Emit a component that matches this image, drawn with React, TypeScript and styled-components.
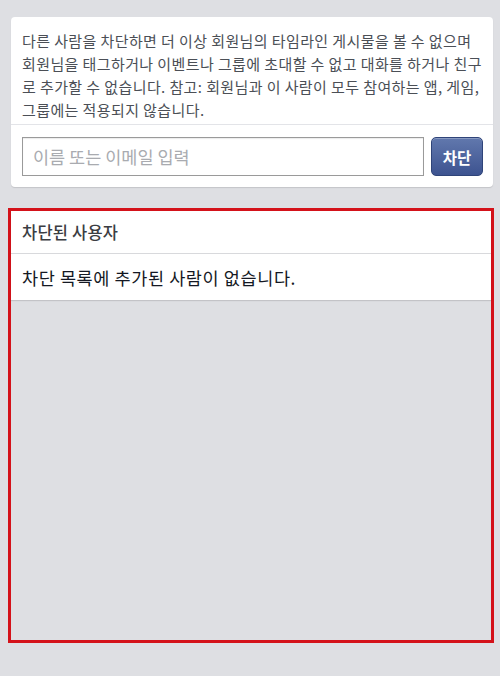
import React from 'react';
import styled, { createGlobalStyle } from 'styled-components';

const GlobalStyle = createGlobalStyle`
    html, body {
        margin: 0;
        padding: 0;
        background-color: #dedfe3;
        font-family: 'Noto Sans CJK KR', 'Noto Sans', sans-serif;
    }
`;

const Page = styled.div`
    width: 500px;
    height: 676px;
    box-sizing: border-box;
    padding: 17px 7px 0 8px;
    display: flex;
    flex-direction: column;
`;

const Card = styled.div`
    background-color: #fff;
    border-radius: 4px;
    box-shadow: 0 1px 1px rgba(0, 0, 0, 0.12);
`;

const InfoCard = styled(Card)`
    margin-left: 3px;
`;

const Notice = styled.p`
    margin: 0;
    padding: 12px 10px 3px 11px;
    font-size: 15px;
    line-height: 23px;
    color: #4b4f56;
    letter-spacing: 0.4px;
    word-break: break-all;
`;

const InputRow = styled.div`
    display: flex;
    align-items: center;
    gap: 7px;
    padding: 12px 10px 11px 11px;
    border-top: 1px solid #e3e4e8;
`;

const NameInput = styled.input`
    flex: 1;
    height: 39px;
    box-sizing: border-box;
    border: 1px solid #9a9a9a;
    border-radius: 0;
    padding: 0 10px;
    font-family: inherit;
    font-size: 17.5px;
    color: #333;
    outline: none;
    box-shadow: inset 0 1px 1px rgba(0, 0, 0, 0.08);

    &::placeholder {
        color: #a9abb0;
    }
`;

const BlockButton = styled.button`
    width: 52px;
    height: 39px;
    border: 1px solid #2f4479;
    border-radius: 5px;
    background: linear-gradient(#6178ad, #3d5390);
    color: #fff;
    font-family: inherit;
    font-size: 15.5px;
    font-weight: 700;
    padding: 0;
    box-shadow: inset 0 1px 0 rgba(255, 255, 255, 0.25);
`;

const Highlight = styled.div`
    margin-top: 21px;
    width: 486px;
    height: 435px;
    box-sizing: border-box;
    border: 3px solid #d4121a;
`;

const BlockedCard = styled.div`
    background-color: #fff;
    box-shadow: 0 1px 1px rgba(0, 0, 0, 0.12);
`;

const SectionHeader = styled.div`
    height: 42px;
    display: flex;
    align-items: center;
    padding: 0 11px;
    font-size: 16.5px;
    font-weight: 500;
    letter-spacing: 0.2px;
    color: #3b3d42;
    border-bottom: 1px solid #d8d9dc;
`;

const EmptyRow = styled.div`
    height: 46px;
    display: flex;
    align-items: center;
    padding: 0 11px;
    font-size: 17.5px;
    letter-spacing: 0.6px;
    color: #141823;
`;

export default function App() {
    return (
        <>
            <GlobalStyle />
            <Page>
                <InfoCard>
                    <Notice>
                        다른 사람을 차단하면 더 이상 회원님의 타임라인 게시물을 볼 수 없으며 회원님을 태그하거나 이벤트나
                        그룹에 초대할 수 없고 대화를 하거나 친구로 추가할 수 없습니다. 참고: 회원님과 이 사람이 모두
                        참여하는 앱, 게임, 그룹에는 적용되지 않습니다.
                    </Notice>
                    <InputRow>
                        <NameInput type='text' placeholder='이름 또는 이메일 입력' />
                        <BlockButton>차단</BlockButton>
                    </InputRow>
                </InfoCard>

                <Highlight>
                    <BlockedCard>
                        <SectionHeader>차단된 사용자</SectionHeader>
                        <EmptyRow>차단 목록에 추가된 사람이 없습니다.</EmptyRow>
                    </BlockedCard>
                </Highlight>
            </Page>
        </>
    );
}
